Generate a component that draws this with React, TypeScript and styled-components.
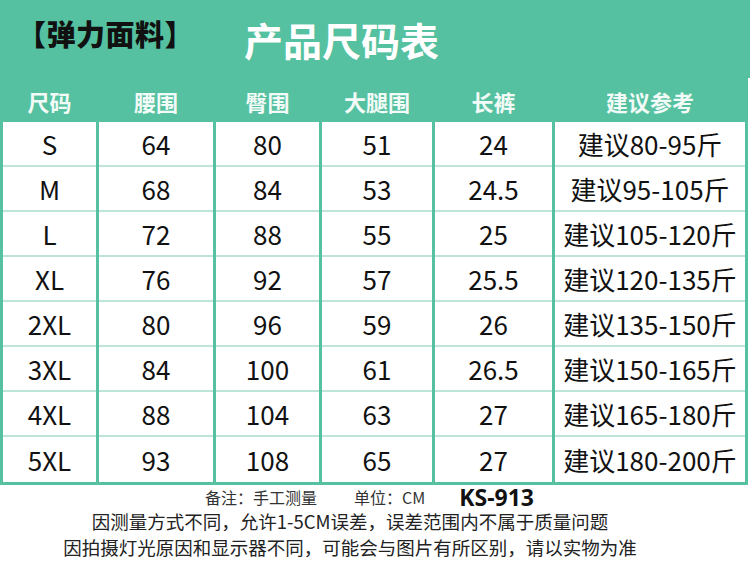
import React from "react";
import styled, { createGlobalStyle } from "styled-components";

const GREEN = "#55c1a0";
const ROW_LINE = "#bfe5d8";

const GlobalStyle = createGlobalStyle`
  body {
    margin: 0;
    background: #ffffff;
    font-family: "Noto Sans CJK SC", "Noto Sans", sans-serif;
  }
`;

const Sheet = styled.div`
  width: 750px;
  height: 588px;
  background: #ffffff;
  overflow: hidden;
`;

const TitleBar = styled.div`
  height: 78px;
  background: ${GREEN};
  display: flex;
  align-items: center;
  padding-left: 17px;
  box-sizing: border-box;
`;

const Tag = styled.div`
  font-size: 29px;
  font-weight: 900;
  color: #111;
  width: 227px;
  margin-top: -12px;
  letter-spacing: 0.5px;
`;

const Title = styled.div`
  font-size: 39px;
  font-weight: 700;
  color: #ffffff;
`;

const Table = styled.div`
  width: 748px;
  display: grid;
  grid-template-columns: 93px 114px 103px 110px 117px 190px;
  column-gap: 3px;
  background: ${GREEN};
  padding: 0 3px 3px 3px;
  box-sizing: border-box;
`;

const HeadCell = styled.div`
  height: 44px;
  display: flex;
  align-items: center;
  justify-content: center;
  font-size: 22px;
  font-weight: 700;
  color: #f2fbf7;
  padding-top: 2px;
  box-sizing: border-box;
`;

const Cell = styled.div<{ $last?: boolean }>`
  height: 45px;
  background: #ffffff;
  display: flex;
  align-items: center;
  justify-content: center;
  font-size: 26px;
  color: #111;
  white-space: nowrap;
  border-bottom: ${(p) => (p.$last ? "none" : `2px solid ${ROW_LINE}`)};
  box-sizing: border-box;
`;

const Footer = styled.div`
  display: flex;
  flex-direction: column;
  color: #222;
`;

const MetaLine = styled.div`
  display: flex;
  align-items: center;
  padding-left: 205px;
  height: 23px;
  font-size: 16px;
  color: #333;
`;

const MetaItem = styled.span<{ $gap?: number }>`
  margin-right: ${(p) => p.$gap ?? 0}px;
  line-height: 20px;
`;

const Code = styled.span`
  font-family: "Noto Sans", "Noto Sans CJK SC", sans-serif;
  font-size: 23px;
  font-weight: 700;
  color: #111;
  line-height: 22px;
`;

const Note = styled.div`
  text-align: center;
  padding-right: 50px;
  font-size: 18.5px;
  line-height: 26px;
`;

const headers = ["尺码", "腰围", "臀围", "大腿围", "长裤", "建议参考"];

const rows: string[][] = [
  ["S", "64", "80", "51", "24", "建议80-95斤"],
  ["M", "68", "84", "53", "24.5", "建议95-105斤"],
  ["L", "72", "88", "55", "25", "建议105-120斤"],
  ["XL", "76", "92", "57", "25.5", "建议120-135斤"],
  ["2XL", "80", "96", "59", "26", "建议135-150斤"],
  ["3XL", "84", "100", "61", "26.5", "建议150-165斤"],
  ["4XL", "88", "104", "63", "27", "建议165-180斤"],
  ["5XL", "93", "108", "65", "27", "建议180-200斤"],
];

export default function App() {
  return (
    <Sheet>
      <GlobalStyle />
      <TitleBar>
        <Tag>【弹力面料】</Tag>
        <Title>产品尺码表</Title>
      </TitleBar>
      <Table>
        {headers.map((h) => (
          <HeadCell key={h}>{h}</HeadCell>
        ))}
        {rows.map((r, i) =>
          r.map((v, j) => (
            <Cell key={`${i}-${j}`} $last={i === rows.length - 1}>
              {v}
            </Cell>
          ))
        )}
      </Table>
      <Footer>
        <MetaLine>
          <MetaItem $gap={37}>备注：手工测量</MetaItem>
          <MetaItem $gap={34}>单位：CM</MetaItem>
          <Code>KS-913</Code>
        </MetaLine>
        <Note>因测量方式不同，允许1-5CM误差，误差范围内不属于质量问题</Note>
        <Note>因拍摄灯光原因和显示器不同，可能会与图片有所区别，请以实物为准</Note>
      </Footer>
    </Sheet>
  );
}
